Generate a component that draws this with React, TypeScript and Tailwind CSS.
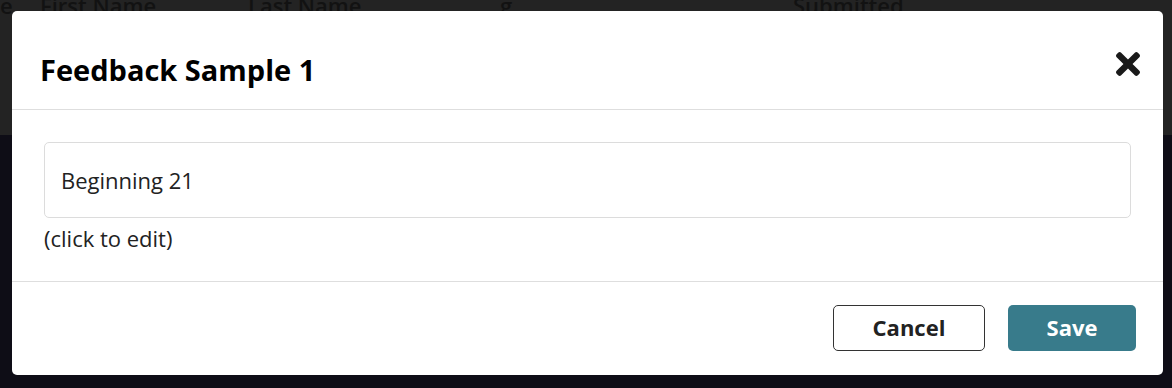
import React from 'react';

const CloseIcon: React.FC = () => (
  <svg viewBox="0 80 352 352" width="24" height="24" fill="currentColor" aria-hidden="true">
    <path d="M242.72 256l100.07-100.07c12.28-12.28 12.28-32.19 0-44.48l-22.24-22.24c-12.28-12.28-32.19-12.28-44.48 0L176 189.28 75.93 89.21c-12.28-12.28-32.19-12.28-44.48 0L9.21 111.45c-12.28 12.28-12.28 32.19 0 44.48L109.28 256 9.21 356.07c-12.28 12.28-12.28 32.19 0 44.48l22.24 22.24c12.28 12.28 32.2 12.28 44.48 0L176 322.72l100.07 100.07c12.28 12.28 32.2 12.28 44.48 0l22.24-22.24c12.28-12.28 12.28-32.19 0-44.48L242.72 256z" />
  </svg>
);

export default function App() {
  return (
    <div className="relative h-[388px] w-[1172px] overflow-hidden bg-[#0e0d16] font-['Open_Sans',sans-serif]">
      {/* Page behind the backdrop */}
      <div className="h-[135px] bg-[#232323]">
        <div className="flex -translate-y-[10px] text-[22px] font-semibold leading-[30px] text-[#121212]">
          <span className="w-[40px]">e</span>
          <span className="w-[208px]">First Name</span>
          <span className="w-[252px]">Last Name</span>
          <span className="w-[293px]">g</span>
          <span>Submitted</span>
        </div>
      </div>

      {/* Modal */}
      <div className="absolute left-[12px] top-[11px] flex w-[1151px] flex-col rounded-[5px] bg-white text-[#222]">
        <div className="flex items-start justify-between border-b border-[#dedede] pb-[21px] pl-[28px] pr-[23px] pt-[41px]">
          <h2 className="text-[29px] font-bold leading-[36px] text-black">Feedback Sample 1</h2>
          <button className="text-[#1a1a1a]">
            <CloseIcon />
          </button>
        </div>

        <div className="px-8 pb-[28px] pt-8">
          <div className="flex h-[76px] items-center rounded-[5px] border border-[#dcdcdc] px-4 text-[22px] text-[#222]">
            Beginning 21
          </div>
          <p className="mt-[5px] text-[22px] leading-[30px] text-[#222]">(click to edit)</p>
        </div>

        <div className="flex justify-end gap-[23px] border-t border-[#dedede] pb-[24px] pr-[27px] pt-[23px]">
          <button className="h-[46px] w-[152px] rounded-[5px] border border-[#333] bg-white pb-[2px] text-[22px] font-bold text-[#222]">
            Cancel
          </button>
          <button className="h-[46px] w-[128px] rounded-[5px] bg-[#387b8b] pb-[2px] text-[22px] font-bold text-white">
            Save
          </button>
        </div>
      </div>
    </div>
  );
}
